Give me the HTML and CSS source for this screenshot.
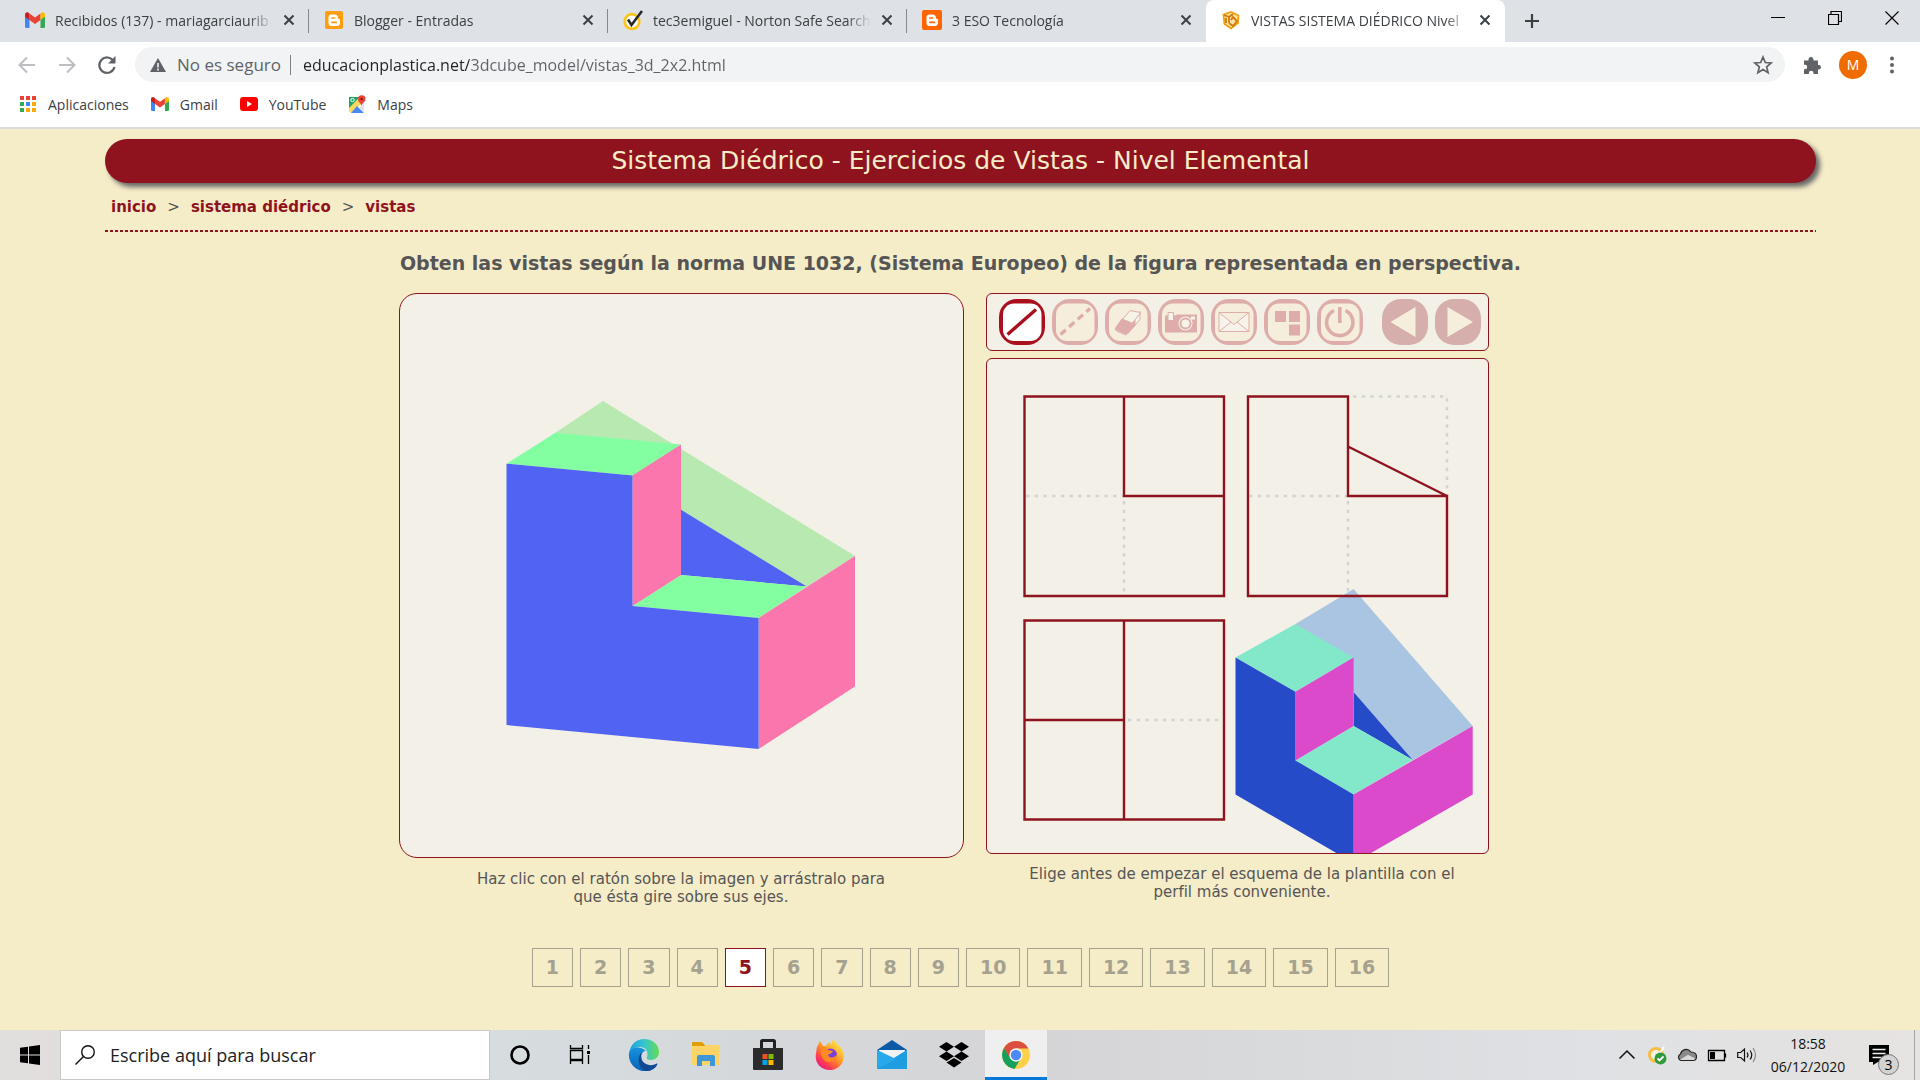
FILE: index.html
```html
<!DOCTYPE html>
<html lang="es">
<head>
<meta charset="utf-8">
<title>VISTAS SISTEMA DIÉDRICO Nivel Elemental</title>
<link rel="stylesheet" href="styles.css">
</head>
<body>
<svg class="defs" aria-hidden="true">
  <symbol id="close" viewBox="0 0 12 12"><path d="M1.500 1.500l9 9M10.500 1.500l-9 9" stroke="#3c4043" stroke-width="2" fill="none"/></symbol>
  <symbol id="gmail" viewBox="0 0 20 16"><path d="M0 3v11.500Q0 16 1.500 16H4.500V7z" fill="#4285f4"/><path d="M20 3v11.500Q20 16 18.500 16H15.500V7z" fill="#34a853"/><path d="M4.500 1.500v6.500L10 12l5.500-4V1.500L10 5.600z" fill="#ea4335"/><path d="M0 2.500v2.300L4.500 8V1.500L3.500.700C2 -.500 0 .600 0 2.500z" fill="#c5221f"/><path d="M20 2.500v2.300L15.500 8V1.500l1-.800C18 -.500 20 .600 20 2.500z" fill="#fbbc04"/></symbol>
  <symbol id="blogger" viewBox="0 0 20 20"><path d="M7.500 4.500h3Q14 4.500 14 8q0 1 1 1t1 1v2.500Q16 16 12.500 16h-5Q4.500 16 4.500 13V7.500Q4.500 4.500 7.500 4.500z" fill="#fff"/><path d="M7.800 8h2.700M7.800 12.300h4.600" stroke="currentColor" stroke-width="1.700" stroke-linecap="round"/></symbol>
  <symbol id="frame" viewBox="0 0 46 46"><rect width="46" height="46" rx="18" fill="currentColor"/><rect class="frame-inner" x="4" y="4.500" width="38.500" height="37.500" rx="11"/></symbol>
</svg>

<header class="browser">
  <div class="tabs">
    <div class="tab"><svg class="favicon" viewBox="0 -2 20 20"><use href="#gmail" width="20" height="16"/></svg><span class="tab-title">Recibidos (137) - mariagarciaurib</span><button class="tab-close" aria-label="Cerrar"><svg><use href="#close"/></svg></button></div>
    <div class="tab"><svg class="favicon blogger-yellow" viewBox="0 0 20 20"><rect x="1" y="1" width="18" height="18" rx="2" fill="currentColor"/><use href="#blogger"/></svg><span class="tab-title">Blogger - Entradas</span><button class="tab-close" aria-label="Cerrar"><svg><use href="#close"/></svg></button></div>
    <div class="tab"><svg class="favicon" viewBox="0 0 20 20"><circle cx="9" cy="11.500" r="7.300" fill="#fff" stroke="#fdc51b" stroke-width="2.800"/><path d="M5 9.500l3.500 5.500L19 1" fill="none" stroke="#26292c" stroke-width="2.600"/></svg><span class="tab-title">tec3emiguel - Norton Safe Search</span><button class="tab-close" aria-label="Cerrar"><svg><use href="#close"/></svg></button></div>
    <div class="tab no-line"><svg class="favicon blogger-orange" viewBox="0 0 20 20"><rect width="20" height="20" rx="2" fill="currentColor"/><use href="#blogger"/></svg><span class="tab-title">3 ESO Tecnología</span><button class="tab-close" aria-label="Cerrar"><svg><use href="#close"/></svg></button></div>
    <div class="tab active"><svg class="favicon" viewBox="0 0 20 20"><path d="M2.500 4.500L10 2l7.500 3.500L17 13l-7 5.500L3.500 14z" fill="#fbe3a6" stroke="#f0a010" stroke-width="1.800"/><path d="M3 5l5 2v6M8 7l4-3M8 13l4 3 4-5-4-4-2 3M5 8v5" fill="none" stroke="#d47a08" stroke-width="1.800"/></svg><span class="tab-title">VISTAS SISTEMA DIÉDRICO Nivel</span><button class="tab-close" aria-label="Cerrar"><svg><use href="#close"/></svg></button></div>
    <button class="new-tab" aria-label="Nueva pestaña"><svg viewBox="0 0 16 16"><path d="M8 1v14M1 8h14" stroke="#3c4043" stroke-width="2.200"/></svg></button>
    <div class="window-buttons">
      <button aria-label="Minimizar"><svg viewBox="0 0 14 14"><path d="M0 6.500h14" stroke="#000"/></svg></button>
      <button aria-label="Restaurar"><svg viewBox="0 0 14 14"><path d="M.5 3.500h10v10h-10zM3 3.500v-3h10.500v10h-3" fill="none" stroke="#000" stroke-width="1.200"/></svg></button>
      <button aria-label="Cerrar ventana"><svg viewBox="0 0 14 14"><path d="M.5.5l13 13M13.500.5l-13 13" stroke="#000" stroke-width="1.100"/></svg></button>
    </div>
  </div>

  <div class="toolbar">
    <button class="nav-button" aria-label="Atrás"><svg viewBox="0 0 20 20"><path d="M18 10H3M10 2.500L2.500 10l7.500 7.500" fill="none" stroke="#bcbec1" stroke-width="2"/></svg></button>
    <button class="nav-button" aria-label="Adelante"><svg viewBox="0 0 20 20"><path d="M2 10h15M10 2.500l7.500 7.500-7.500 7.500" fill="none" stroke="#bcbec1" stroke-width="2"/></svg></button>
    <button class="nav-button" aria-label="Recargar"><svg viewBox="0 0 20 20"><path d="M16.500 6A7.700 7.700 0 1 0 17.500 12" fill="none" stroke="#5f6368" stroke-width="2.200"/><path d="M18.500 1v7.500H11z" fill="#5f6368"/></svg></button>
    <div class="omnibox">
      <svg class="warning" viewBox="0 0 16 16"><path d="M8 1l8 14H0z" fill="#5f6368"/><path d="M8 6v4.500M8 11.500v2" stroke="#f1f3f4" stroke-width="1.600"/></svg>
      <label class="security" for="url">No es seguro</label>
      <input class="url" id="url" type="text" value="educacionplastica.net/3dcube_model/vistas_3d_2x2.html">
      <button class="star" aria-label="Favorito"><svg viewBox="0 0 20 20"><path d="M10 2l2.300 5.500 5.900.500-4.500 3.900 1.400 5.800L10 14.600l-5.100 3.100 1.400-5.800L1.800 8l5.900-.500z" fill="none" stroke="#5f6368" stroke-width="1.700"/></svg></button>
    </div>
    <button class="extensions" aria-label="Extensiones"><svg viewBox="0 0 20 20"><path d="M2 5.500h4.500v-1a2.500 2.500 0 0 1 5 0v1H16V10h.700a2.300 2.300 0 0 1 0 4.600H16V19h-4.500v-1a2.300 2.300 0 0 0-4.600 0v1H2v-4.800h1a2.200 2.200 0 0 0 0-4.400H2z" fill="#5f6368"/></svg></button>
    <button class="avatar">M</button>
    <button class="menu" aria-label="Menú"><svg viewBox="0 0 4 18"><g fill="#5f6368"><circle cx="2" cy="2.500" r="2"/><circle cx="2" cy="9" r="2"/><circle cx="2" cy="15.500" r="2"/></g></svg></button>
  </div>

  <nav class="bookmarks">
    <a href="#"><svg viewBox="0 0 18 18"><path d="M1 1h4v4H1zM7 1h4v4H7zM13 1h4v4h-4z" fill="#ea4335"/><path d="M1 7h4v4H1zM1 13h4v4H1z" fill="#34a853"/><path d="M7 7h4v4H7z" fill="#4285f4"/><path d="M13 7h4v4h-4zM7 13h4v4H7zM13 13h4v4h-4z" fill="#fbab04"/></svg>Aplicaciones</a>
    <a href="#"><svg viewBox="0 -2 20 20"><use href="#gmail" width="20" height="16"/></svg>Gmail</a>
    <a href="#"><svg viewBox="0 0 18 18"><rect y="2" width="18" height="14" rx="3" fill="#f00"/><path d="M7 6v6l5-3z" fill="#fff"/></svg>YouTube</a>
    <a href="#"><svg viewBox="0 0 18 18"><path d="M1 2h11L1 14z" fill="#1fa463"/><path d="M1 17V13L12 2h4v4L4 18z" fill="#fbd75b"/><path d="M3 18l6-7 7 7z" fill="#4a8af4"/><path d="M11 13l5-5v9z" fill="#dfe1e5"/><path d="M13.500 11C13 8 10 7 10 4a3.700 3.700 0 0 1 7.500 0c0 3-3.500 4-4 7z" fill="#ea4335"/><circle cx="13.700" cy="4" r="1.300" fill="#8c1d16"/><circle cx="4.500" cy="5" r="1.700" fill="none" stroke="#fff"/></svg>Maps</a>
  </nav>
</header>

<main class="page">
  <h1 class="banner">Sistema Diédrico - Ejercicios de Vistas - Nivel Elemental</h1>
  <nav class="crumbs"><a href="#">inicio</a><span>&gt;</span><a href="#">sistema diédrico</a><span>&gt;</span><a href="#">vistas</a></nav>
  <h2 class="task">Obten las vistas según la norma UNE 1032, (Sistema Europeo) de la figura representada en perspectiva.</h2>

  <div class="workspace">
    <section class="model">
      <svg class="card model-card" viewBox="0 0 563 563" role="img" aria-label="Figura en perspectiva">
        <path d="M203 107L455 262 406.700 293 281 216 155 139z" fill="#b7e9b0"/>
        <path d="M281 215.800V281l125.700 11.500z" fill="#5063f2"/>
        <path d="M106.500 169.700L155.400 138.700 281 150.500 232.500 181.500zM232.500 312L281 281l125.700 11.500L358.600 324z" fill="#83fea1"/>
        <path d="M232.500 181.500L281 150.500V281l-48.500 31zM358.600 324L455 262V392.500L358.600 455z" fill="#fa76ad"/>
        <path d="M106.500 169.700l126 11.800V312l126.100 12V455L106.500 431z" fill="#5063f2"/>
      </svg>
      <p class="hint">Haz clic con el ratón sobre la imagen y arrástralo para que ésta gire sobre sus ejes.</p>
    </section>

    <section class="drawing">
      <div class="card tools">
        <button class="tool selected" aria-label="Línea"><svg viewBox="0 0 46 46"><use href="#frame"/><path d="M8.500 35.500L37 10.500" stroke="currentColor" stroke-width="3.400"/></svg></button>
        <button class="tool" aria-label="Línea discontinua"><svg viewBox="0 0 46 46"><use href="#frame"/><path d="M8.500 35.500L38 9.500" stroke="currentColor" stroke-width="3.400" stroke-dasharray="7 4.500"/></svg></button>
        <button class="tool" aria-label="Borrador"><svg viewBox="0 0 46 46"><use href="#frame"/><path d="M17 20l9 2.500L35 12.500v8L22.500 35z" fill="#f6f3e8" stroke="currentColor"/><path d="M25 11.500l10.500 2-9 12-10-4zM16.500 20.500l10 4.500-5.500 11-9.500-4q-2-1-.500-3.500z" fill="#f6f3e8" stroke="currentColor"/><path d="M17 19.500l10 4-6 12-9.500-4q-2-1-.500-3.500zM21.500 35.500l9-9V21l-4 2.500z" fill="currentColor"/></svg></button>
        <button class="tool" aria-label="Captura"><svg viewBox="0 0 46 46"><use href="#frame"/><path d="M7 16.500h10l2-1h20v18H7z" fill="currentColor"/><path d="M10 13.500h5.500v8H10z" fill="#f6f3e8" stroke="currentColor"/><path d="M33 17.500h4v3h-4z" fill="#f6f3e8"/><circle cx="27.500" cy="24.500" r="7" fill="#f6f3e8"/><circle cx="27.500" cy="24.500" r="5" fill="none" stroke="currentColor" stroke-width="2"/></svg></button>
        <button class="tool" aria-label="Enviar"><svg viewBox="0 0 46 46"><use href="#frame"/><path d="M8 13.500h30v19H8zM8 13.500l15 12 15-12M8 32.500l12-9.500M38 32.500L26 23" fill="#f7f3ea" stroke="currentColor"/></svg></button>
        <button class="tool" aria-label="Plantilla"><svg viewBox="0 0 46 46"><use href="#frame"/><path d="M11 12h11v11H11zM25 12h11v11H25zM25 25.500h11v11H25z" fill="currentColor"/></svg></button>
        <button class="tool" aria-label="Reiniciar"><svg viewBox="0 0 46 46"><use href="#frame"/><path d="M17 11.500a13.200 13.200 0 1 0 11.500 0M22.800 8v16" fill="none" stroke="currentColor" stroke-width="3.600"/></svg></button>
        <button class="tool step first-step" aria-label="Anterior"><svg viewBox="0 0 46 46"><rect width="46" height="46" rx="19" fill="currentColor"/><path d="M33.500 8v30L8.500 23z" fill="#f5eedd"/></svg></button>
        <button class="tool step" aria-label="Siguiente"><svg viewBox="0 0 46 46"><rect width="46" height="46" rx="19" fill="currentColor"/><path d="M12.500 8v30l25.500-15z" fill="#f5eedd"/></svg></button>
      </div>
      <svg class="card views-card" viewBox="0 0 501 494" role="img" aria-label="Alzado, perfil y planta">
        <path d="M366.600 230L485.700 367 425.800 401 366.600 333 308.400 265z" fill="#a9c5e1"/>
        <path d="M366.600 333V367l59.200 34z" fill="#254bc9"/>
        <path d="M248.500 298.500L308.400 265 366.600 298.500 308.400 332.800zM308.400 401.400L366.600 367l59.200 34-59.200 34.600z" fill="#83e8c9"/>
        <path d="M308.400 332.800L366.600 298.500V367l-58.200 34.400zM366.600 435.600L485.700 367v68.600L366.600 504z" fill="#da4acb"/>
        <path d="M248.500 298.500l59.900 34.300v68.600l58.200 34.200V504L248.500 435.600z" fill="#254bc9"/>
        <path fill="none" stroke="#d3d3d3" stroke-width="2.500" stroke-dasharray="3.400 5.300" d="M39 137H137M137 142V237M262 137H361M361 142V237M366 37.500H460V137M141 361H237"/>
        <path fill="none" stroke="#8f131e" stroke-width="2.400" d="M37.500 37.500H237V237H37.500zM137 37.500V137H237M261 37.500H361V137H460V237H261zM361 87.500L460 137M37.500 261.500H237V460.500H37.500zM137 261.500V460.500M37.500 361H137"/>
      </svg>
      <p class="hint">Elige antes de empezar el esquema de la plantilla con el perfil más conveniente.</p>
    </section>
  </div>

  <nav class="pager">
    <a href="#">1</a><a href="#">2</a><a href="#">3</a><a href="#">4</a><a href="#" class="current">5</a><a href="#">6</a><a href="#">7</a><a href="#">8</a><a href="#">9</a><a href="#">10</a><a href="#">11</a><a href="#">12</a><a href="#">13</a><a href="#">14</a><a href="#">15</a><a href="#">16</a>
  </nav>
</main>

<footer class="taskbar">
  <button class="start" aria-label="Inicio"><svg viewBox="0 0 20 20"><path d="M0 2.800l8-1.100V9.500H0zM9 1.500L20 0v9.500H9zM0 10.500h8v7.800L0 17.200zM9 10.500h11V20L9 18.500z"/></svg></button>
  <label class="search"><svg viewBox="0 0 20 20"><circle cx="13" cy="7" r="6.300" fill="none" stroke="#111" stroke-width="1.400"/><path d="M8.500 11.500L.5 19.500" stroke="#111" stroke-width="1.400"/></svg><input type="text" placeholder="Escribe aquí para buscar" aria-label="Buscar"></label>
  <div class="shell-buttons">
    <button aria-label="Cortana"><svg viewBox="0 0 30 30"><circle cx="15" cy="15" r="8.500" fill="none" stroke="#000" stroke-width="2.600"/></svg></button>
    <button aria-label="Vista de tareas"><svg viewBox="0 0 30 30"><path d="M5.500 5v3.500h12V5M5.500 24v-3.500h12V24M5.500 10.500h12v9h-12zM23.500 5v4M23.500 15v9" fill="none" stroke="#000" stroke-width="1.300"/><path d="M22 11h3v3h-3z"/></svg></button>
  </div>
  <div class="apps">
    <button aria-label="Edge"><svg viewBox="0 0 32 32"><defs><linearGradient id="edge-top"><stop offset="0" stop-color="#1b9de2"/><stop offset=".5" stop-color="#36c6d0"/><stop offset="1" stop-color="#63dc52"/></linearGradient><linearGradient id="edge-low" x2="0" y2="1"><stop offset="0" stop-color="#1593dc"/><stop offset="1" stop-color="#0b62b8"/></linearGradient></defs><path d="M1 15C2 5 9 0 16 0c9 0 15 6 15 13 0 5-4 8-8 8-3 0-5-1-4-3 2-6-2-10-7-10S2 11 1 15z" fill="url(#edge-top)"/><path d="M1 14c2-6 11-8 17-2-6 0-6 10-1 14 5 3 9 2 12 0-4 6-10 7-15 6C5 30 0 22 1 14z" fill="url(#edge-low)"/><path d="M14 13c-5 4-5 16 4 19 4 0 9-2 11-6 1-1 0-2-1-1-6 3-15 0-15-8 0-2 0-3 1-4z" fill="#114a93"/></svg></button>
    <button aria-label="Explorador de archivos"><svg viewBox="0 0 32 32"><path d="M2 4q0-1 1-1h9l3 3v4H2z" fill="#e09f00"/><path d="M2 7h12l3-1h12v20H2z" fill="#fdd365"/><path d="M7 27V18q0-2 2-2h14q2 0 2 2v9h-5v-5h-8v5z" fill="#3d97d6"/></svg></button>
    <button aria-label="Microsoft Store"><svg viewBox="0 0 32 32"><path d="M9.500 10V2.500Q9.500 1.500 10.500 1.500h11q1 0 1 1V10" fill="none" stroke="#222" stroke-width="3"/><path d="M1 9h30v21q0 1-1 1H2q-1 0-1-1z" fill="#2c2c2c"/><path d="M10.500 15h5v5h-5z" fill="#f25022"/><path d="M16.500 15h5v5h-5z" fill="#7fba00"/><path d="M10.500 21h5v5h-5z" fill="#00a4ef"/><path d="M16.500 21h5v5h-5z" fill="#ffb900"/></svg></button>
    <button aria-label="Firefox"><svg viewBox="0 0 32 32"><defs><linearGradient id="fox" x1="1" x2=".2" y2="1"><stop offset=".1" stop-color="#fff14c"/><stop offset=".5" stop-color="#ff9a25"/><stop offset=".8" stop-color="#ff3b50"/><stop offset="1" stop-color="#e21590"/></linearGradient></defs><path d="M3 8l3-6 3 5h3c1-2 2-3 4-4l1 4c0-3 1-5 3-7 1 5 7 6 9 13 3 10-4 18-13 18S0 24 2 14z" fill="url(#fox)"/><circle cx="16.500" cy="16" r="6.500" fill="#7540dc"/><path d="M6 8c4-1 6 0 8 3l5 1c-1 3-3 2-5 4 2 4 7 3 9-1 0 6-4 8-8 8S7 19 7 14z" fill="#ff8a24"/></svg></button>
    <button aria-label="Correo"><svg viewBox="0 0 32 32"><path d="M1 11L16 1l15 10-15 12z" fill="#0a5aa8"/><path d="M3 11h26v6L16 22 3 17z" fill="#f1f2f3"/><path d="M1 11l15 9 15-9v19H1z" fill="#33b5f0"/><path d="M1 30L31 11v19z" fill="#1e9de0"/><path d="M1 11l19 9-19 10z" fill="#27a8ea"/></svg></button>
    <button aria-label="Dropbox"><svg viewBox="0 0 32 32"><path d="M8.500 3l7.500 4.700-7.500 4.800L1 7.700zM23.500 3L31 7.700l-7.500 4.800L16 7.700zM8.500 12.500l7.500 4.700-7.500 4.800L1 17.200zM23.500 12.500l7.500 4.700-7.500 4.800-7.500-4.800zM16 19l7.500 4.600L16 28.500l-7.500-4.900z"/></svg></button>
    <button class="running" aria-label="Chrome"><svg viewBox="0 0 32 32"><circle cx="16" cy="16" r="14" fill="#fdd147"/><path d="M16 16L3.900 9A14 14 0 0 0 14.500 29.900L21 19z" fill="#16a05b"/><path d="M16 9.500H28.400A14 14 0 0 0 3.900 9L10 19z" fill="#dc4e41"/><circle cx="16" cy="16" r="6.700" fill="#f5f5f5"/><circle cx="16" cy="16" r="5.200" fill="#4c8bf5"/></svg></button>
  </div>
  <div class="tray">
    <button aria-label="Iconos ocultos"><svg viewBox="0 0 20 20"><path d="M2.500 13.500L10 6l7.500 7.500" fill="none" stroke="#111" stroke-width="1.500"/></svg></button>
    <button aria-label="Norton"><svg viewBox="0 0 20 20"><circle cx="9" cy="10" r="6.500" fill="#f7f1df" stroke="#f8bd45" stroke-width="3"/><path d="M9 9l2 2 6-9" stroke="#fff" stroke-width="2" fill="none"/><circle cx="13.500" cy="13.500" r="6" fill="#2f9a3c"/><path d="M10.500 13.500l2 2 4-4" stroke="#fff" stroke-width="1.800" fill="none"/></svg></button>
    <button aria-label="OneDrive"><svg viewBox="0 0 20 20"><path d="M4 15.500a3.500 3.500 0 0 1-.5-6.500C4.500 5 10 2 14 7c4 0 5.500 2.500 5.500 4.500s-1 4-3.500 4z" fill="#8a8a8a" stroke="#222" stroke-width="1.200"/><path d="M3 14.700l8-5 7.500 4-2 1.300H4z" fill="#d9d9d9"/></svg></button>
    <button aria-label="Batería"><svg viewBox="0 0 20 20"><path d="M1.500 5.500h16v10h-16zM18.500 8.500v4" fill="none" stroke="#000" stroke-width="1.300"/><path d="M3 7h5v7H3z"/></svg></button>
    <button aria-label="Volumen"><svg viewBox="0 0 20 20"><path d="M.7 7.500h3L7.500 4v12L3.700 12.500h-3zM10 7.500q2 2.500 0 5M13 5.500q3.500 4.500 0 9" fill="none" stroke="#111" stroke-width="1.200"/><path d="M16 3q5 7 0 14" fill="none" stroke="#888" stroke-width="1.200"/></svg></button>
    <time class="clock"><span>18:58</span><span>06/12/2020</span></time>
    <button class="notices" aria-label="Notificaciones"><svg viewBox="0 0 20 20"><path d="M0 0h20v17H9l-5 3v-3H0z"/><path d="M3.500 4.500h13M3.500 8.500h13M3.500 12.500h9" stroke="#eee" stroke-width="1.300"/></svg><span class="badge">3</span></button>
  </div>
</footer>
</body>
</html>
```
FILE: styles.css
```css
* { box-sizing: border-box; }

:root {
  --wine: #8f131e;
  --cream: #f5ecc8;
  --paper: #f3f0e7;
  --grey: #5f6368;
}

body {
  margin: 0;
  min-height: 100vh;
  display: flex;
  flex-direction: column;
  background: var(--cream);
  font-family: "Open Sans", "Noto Sans", sans-serif;
}

button {
  padding: 0;
  border: 0;
  background: none;
  font: inherit;
  display: flex;
  align-items: center;
  justify-content: center;
}

a { text-decoration: none; }
svg { display: block; flex: none; }
.defs { position: absolute; width: 0; height: 0; }

/* Browser window */
.browser {
  background: #fff;
  border-bottom: 2px solid #dadce0;
}

.tabs {
  display: flex;
  height: 42px;
  padding-left: 10px;
  background: #dee1e6;
}

.tab {
  display: flex;
  align-items: center;
  flex: 0 1 299px;
  min-width: 0;
  padding: 0 10px 2px 15px;
  color: #3c4043;
  font-size: 14px;
  background: linear-gradient(#85888d, #85888d) right center / 1px 24px no-repeat;
}

.tab.no-line { background: none; }

.tab.active {
  background: #fff;
  border-radius: 8px 8px 0 0;
}

.favicon { width: 20px; height: 20px; }
.blogger-yellow { color: #ff9e0f; }
.blogger-orange { color: #ff6600; }

.tab-title {
  flex: 1;
  min-width: 0;
  margin: 0 6px 0 10px;
  overflow: hidden;
  white-space: nowrap;
  mask-image: linear-gradient(to left, transparent, #000 24px);
}

.tab-close { width: 20px; height: 20px; }
.tab-close svg { width: 12px; height: 12px; }

.new-tab { width: 54px; }
.new-tab svg { width: 16px; height: 16px; }

.window-buttons {
  display: flex;
  margin-left: auto;
}

.window-buttons button { width: 57px; height: 36px; }
.window-buttons svg { width: 14px; height: 14px; }

.toolbar {
  display: flex;
  align-items: center;
  height: 45px;
  padding: 0 14px 0 7px;
}

.nav-button { width: 40px; height: 40px; }
.nav-button svg { width: 20px; height: 20px; }

.omnibox {
  display: flex;
  align-items: center;
  flex: 1;
  height: 35px;
  margin-left: 8px;
  padding: 0 12px 0 15px;
  border-radius: 18px;
  background: #f1f3f4;
  font-size: 17px;
}

.warning { width: 16px; height: 16px; }

.security {
  margin: 0 12px 0 11px;
  padding-right: 9px;
  border-right: 1px solid #7d8084;
  line-height: 20px;
  color: var(--grey);
}

.url {
  flex: 1;
  min-width: 0;
  padding: 0;
  border: 0;
  font: inherit;
  font-size: 16px;
  color: transparent;
  background: linear-gradient(to right, #202124 166px, #5f6368 166px);
  background-clip: text;
}

.star svg,
.extensions svg { width: 20px; height: 20px; }
.extensions { width: 54px; }

.avatar {
  width: 28px;
  height: 28px;
  border-radius: 50%;
  background: #ef6c00;
  color: #fff;
  font-size: 14px;
}

.menu { width: 28px; margin-left: 11px; }
.menu svg { width: 4px; height: 18px; }

.bookmarks {
  display: flex;
  gap: 22px;
  height: 40px;
  padding: 0 19px 6px;
  align-items: center;
}

.bookmarks a {
  display: flex;
  align-items: center;
  gap: 11px;
  font-size: 14px;
  color: #3c4043;
}

.bookmarks svg { width: 18px; height: 18px; }

/* Exercise page */
.page {
  flex: 1;
  padding: 10px 104px 40px 105px;
  font-family: Verdana, "DejaVu Sans", sans-serif;
  color: #555;
}

.banner {
  margin: 0;
  border-radius: 22px;
  background: var(--wine);
  box-shadow: 4px 4px 5px #666;
  color: var(--cream);
  font-size: 25px;
  font-weight: 400;
  line-height: 44px;
  text-align: center;
}

.crumbs {
  display: flex;
  gap: 11px;
  height: 49px;
  padding: 15px 6px 0;
  font-size: 15px;
  line-height: 18px;
  background: repeating-linear-gradient(to right, var(--wine) 0 3px, transparent 3px 5px) left bottom / 100% 2px no-repeat;
}

.crumbs a {
  color: var(--wine);
  font-weight: 700;
}

.task {
  margin: 19px 0 17px;
  font-size: 19px;
  line-height: 25px;
  text-align: center;
}

.workspace {
  display: flex;
  justify-content: center;
  gap: 22px;
  padding-right: 34px;
}

.model { flex: 0 1 565px; }
.drawing { flex: 0 1 503px; }

.card {
  width: 100%;
  border: 1px solid var(--wine);
  border-radius: 6px;
  background: var(--paper);
}

.model-card { border-radius: 18px; }

.tools {
  display: flex;
  gap: 7px;
  margin-bottom: 7px;
  padding: 5px 7px 5px 12px;
}

.tool { width: 46px; height: 46px; color: #deadab; flex: 0 1 auto; }
.tool svg { width: 46px; height: 46px; fill: #f5eedd; }
.tool.selected { color: #aa0f1d; }
.tool.selected svg { fill: #fff; }
.tool.step { color: #d6afad; }
.first-step { margin-left: 12px; }

.hint {
  width: 440px;
  max-width: 100%;
  margin: 12px auto 0;
  font-size: 15px;
  line-height: 18px;
  text-align: center;
}

.drawing .hint {
  margin-top: 11px;
  padding-left: 10px;
}

.pager {
  display: flex;
  justify-content: center;
  flex-wrap: wrap;
  gap: 7px;
  margin-top: 42px;
}

.pager a {
  padding: 0 13px;
  border: 1px solid #a5a18f;
  color: #a5a18f;
  font-size: 19px;
  font-weight: 700;
  line-height: 37px;
}

.pager .current {
  border-color: var(--wine);
  background: #fff;
  color: var(--wine);
}

/* Windows taskbar */
.taskbar {
  display: flex;
  height: 50px;
  background: linear-gradient(to right, #e0dfdd, #e2dddd 60px, #d6dddf 500px, #d5d8db 750px, #d5d5d7 1050px, #dfe1e4 1600px, #e6e3e1);
}

.start { width: 60px; }
.start svg { width: 20px; height: 20px; }

.search {
  display: flex;
  align-items: center;
  gap: 15px;
  flex: 0 1 430px;
  padding: 0 14px;
  border: 1px solid #c8c8c8;
  background: #fff;
}

.search svg { width: 20px; height: 20px; }

.search input {
  flex: 1;
  min-width: 0;
  padding: 0;
  border: 0;
  font: inherit;
  font-size: 18px;
}

.search input::placeholder { color: #222; }

.shell-buttons,
.apps { display: flex; }
.shell-buttons { margin-right: 3px; }
.shell-buttons button { width: 60px; }
.shell-buttons svg { width: 30px; height: 30px; }
.apps button { width: 62px; border-bottom: 3px solid transparent; border-top: 3px solid transparent; }
.apps svg { width: 32px; height: 32px; }

.apps .running {
  background: #efefef;
  border-top-color: #efefef;
  border-bottom-color: #0078d7;
}

.tray {
  display: flex;
  align-items: center;
  margin-left: auto;
  margin-right: 5px;
  border-right: 1px solid #a5a5a5;
}

.tray button { width: 30px; }
.tray svg { width: 20px; height: 20px; }

.clock {
  display: flex;
  flex-direction: column;
  width: 92px;
  align-items: center;
  font-size: 14px;
  line-height: 23px;
  color: #111;
}

.tray .notices {
  position: relative;
  width: 60px;
  height: 50px;
  padding-right: 10px;
}

.badge {
  position: absolute;
  left: 24px;
  top: 24px;
  width: 21px;
  height: 21px;
  border: 1px solid #777;
  border-radius: 50%;
  background: #d3d3d3;
  font-size: 14px;
  line-height: 19px;
  text-align: center;
}
```
